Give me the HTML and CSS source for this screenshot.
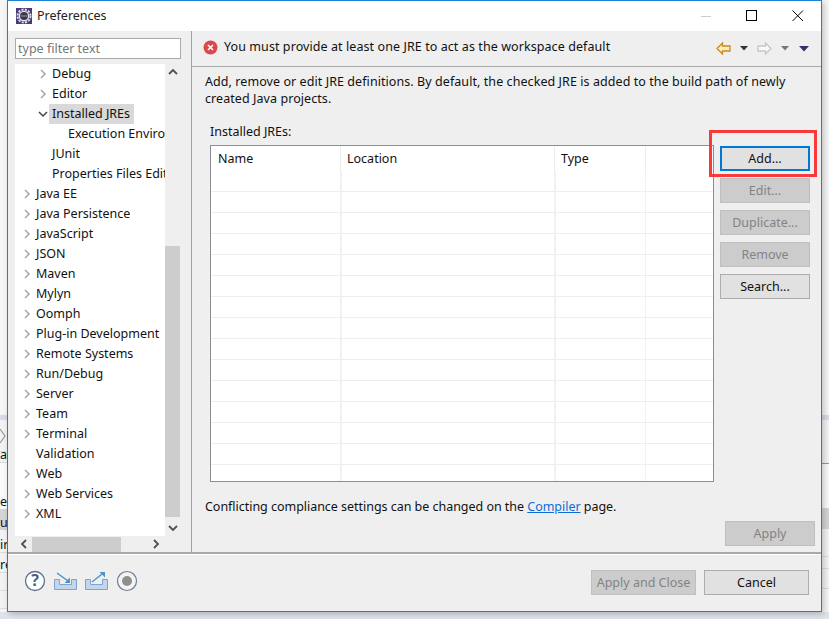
FILE: index.html
```html
<!DOCTYPE html>
<html lang="en">
<head>
<meta charset="utf-8">
<title>Preferences</title>
<link rel="stylesheet" href="styles.css">
</head>
<body>
<div class="desktop">
  <div class="strip strip-left">
    <div class="s-band"></div>
    <div class="s-row h32"><svg width="7" height="16" viewBox="0 0 7 16"><path d="M0 1l5 7-5 7" fill="none" stroke="#999" stroke-width="1.200"/></svg></div>
    <div class="s-row h10">ar</div>
    <div class="s-row h28 plain"></div>
    <div class="s-row h18 plain">ed</div>
    <div class="s-row h21 grey">ui</div>
    <div class="s-row h23">ir</div>
    <div class="s-row h20">re</div>
    <div class="s-row h18"></div>
    <div class="s-row h18"></div>
  </div>
  <div class="strip strip-right">
    <div class="s-band"></div>
    <div class="s-row h44 dark"></div>
    <div class="s-row h44 plain"></div>
    <div class="s-row h21 grey"></div>
    <div class="s-row h28"></div>
    <div class="s-row h12"></div>
    <div class="s-row h20"></div>
  </div>
  <div class="window">
    <header class="titlebar">
      <svg class="app-icon" width="16" height="16" viewBox="0 0 16 16"><rect width="16" height="16" fill="#4b3a78"/><circle cx="8" cy="8" r="6.500" fill="none" stroke="#d9d9e4" stroke-width="2" stroke-dasharray="2.200 1.200"/><circle cx="8" cy="8" r="5.300" fill="#e6e6ee"/><circle cx="8" cy="8" r="4" fill="#3a3850"/><path d="M4.500 7.400h7v1.200h-7z" fill="#8a88a0"/></svg>
      <span class="title">Preferences</span>
      <span class="win-btn"><svg width="12" height="12" viewBox="0 0 12 12"><path d="M1 6.500h10" stroke="#ccc"/></svg></span>
      <span class="win-btn"><svg width="12" height="12" viewBox="0 0 12 12"><rect x=".5" y=".5" width="10" height="10" fill="none" stroke="#000"/></svg></span>
      <span class="win-btn"><svg width="12" height="12" viewBox="0 0 12 12"><path d="M.5.5l10.500 10.500M11 .5L.5 11" stroke="#000" fill="none"/></svg></span>
    </header>
    <div class="body">
      <aside class="left">
        <input class="filter" type="text" placeholder="type filter text">
        <div class="tree-wrap">
          <div class="tree">
            <div class="node l1"><svg class="chev" viewBox="0 0 8 10"><path d="M2 1l4 4-4 4" /></svg><span>Debug</span></div>
            <div class="node l1"><svg class="chev" viewBox="0 0 8 10"><path d="M2 1l4 4-4 4" /></svg><span>Editor</span></div>
            <div class="node l1"><svg class="chev open" viewBox="0 0 10 8"><path d="M1 2l4 4 4-4" /></svg><span class="sel">Installed JREs</span></div>
            <div class="node l2"><span>Execution Enviro</span></div>
            <div class="node l1 leaf"><span>JUnit</span></div>
            <div class="node l1 leaf"><span>Properties Files Edit</span></div>
            <div class="node"><svg class="chev" viewBox="0 0 8 10"><path d="M2 1l4 4-4 4" /></svg><span>Java EE</span></div>
            <div class="node"><svg class="chev" viewBox="0 0 8 10"><path d="M2 1l4 4-4 4" /></svg><span>Java Persistence</span></div>
            <div class="node"><svg class="chev" viewBox="0 0 8 10"><path d="M2 1l4 4-4 4" /></svg><span>JavaScript</span></div>
            <div class="node"><svg class="chev" viewBox="0 0 8 10"><path d="M2 1l4 4-4 4" /></svg><span>JSON</span></div>
            <div class="node"><svg class="chev" viewBox="0 0 8 10"><path d="M2 1l4 4-4 4" /></svg><span>Maven</span></div>
            <div class="node"><svg class="chev" viewBox="0 0 8 10"><path d="M2 1l4 4-4 4" /></svg><span>Mylyn</span></div>
            <div class="node"><svg class="chev" viewBox="0 0 8 10"><path d="M2 1l4 4-4 4" /></svg><span>Oomph</span></div>
            <div class="node"><svg class="chev" viewBox="0 0 8 10"><path d="M2 1l4 4-4 4" /></svg><span>Plug-in Development</span></div>
            <div class="node"><svg class="chev" viewBox="0 0 8 10"><path d="M2 1l4 4-4 4" /></svg><span>Remote Systems</span></div>
            <div class="node"><svg class="chev" viewBox="0 0 8 10"><path d="M2 1l4 4-4 4" /></svg><span>Run/Debug</span></div>
            <div class="node"><svg class="chev" viewBox="0 0 8 10"><path d="M2 1l4 4-4 4" /></svg><span>Server</span></div>
            <div class="node"><svg class="chev" viewBox="0 0 8 10"><path d="M2 1l4 4-4 4" /></svg><span>Team</span></div>
            <div class="node"><svg class="chev" viewBox="0 0 8 10"><path d="M2 1l4 4-4 4" /></svg><span>Terminal</span></div>
            <div class="node leaf"><span>Validation</span></div>
            <div class="node"><svg class="chev" viewBox="0 0 8 10"><path d="M2 1l4 4-4 4" /></svg><span>Web</span></div>
            <div class="node"><svg class="chev" viewBox="0 0 8 10"><path d="M2 1l4 4-4 4" /></svg><span>Web Services</span></div>
            <div class="node"><svg class="chev" viewBox="0 0 8 10"><path d="M2 1l4 4-4 4" /></svg><span>XML</span></div>
          </div>
          <div class="vscroll">
            <svg class="sb-arrow" viewBox="0 0 10 8"><path d="M1 6l4-4 4 4"/></svg>
            <div class="vtrack"><div class="vthumb"></div></div>
            <svg class="sb-arrow" viewBox="0 0 10 8"><path d="M1 2l4 4 4-4"/></svg>
          </div>
          <div class="hscroll">
            <svg class="sb-arrow-h" viewBox="0 0 8 10"><path d="M6 1L2 5l4 4"/></svg>
            <div class="htrack"><div class="hthumb"></div></div>
            <svg class="sb-arrow-h" viewBox="0 0 8 10"><path d="M2 1l4 4-4 4"/></svg>
          </div>
        </div>
      </aside>
      <main class="right">
        <div class="msgbar">
          <svg width="15" height="15" viewBox="0 0 15 15"><circle cx="7.500" cy="7.500" r="7" fill="#d8484c"/><path d="M5 5l5 5M10 5l-5 5" stroke="#fff" stroke-width="1.600"/></svg>
          <span class="msg">You must provide at least one JRE to act as the workspace default</span>
          <span class="nav">
            <svg width="15" height="13" viewBox="0 0 15 13"><path d="M1 6.500L6.500 1v3H14v5H6.500v3z" fill="#fdeeb8" stroke="#c98a1e" stroke-width="1.300"/></svg>
            <svg width="8" height="5" viewBox="0 0 8 5"><path d="M0 0h8L4 4.500z" fill="#333"/></svg>
            <svg width="15" height="13" viewBox="0 0 15 13"><path d="M14 6.500L8.500 1v3H1v5h7.500v3z" fill="#f8f8f8" stroke="#c6c6c6" stroke-width="1.300"/></svg>
            <svg width="8" height="5" viewBox="0 0 8 5"><path d="M0 0h8L4 4.500z" fill="#777"/></svg>
            <svg class="last" width="10" height="6" viewBox="0 0 10 6"><path d="M0 0h10L5 5.500z" fill="#3f2a6e"/></svg>
          </span>
        </div>
        <div class="page">
          <p class="desc">Add, remove or edit JRE definitions. By default, the checked JRE is added to the build path of newly created Java projects.</p>
          <div class="label">Installed JREs:</div>
          <div class="table-row">
            <div class="table">
              <div class="thead"><span class="c1">Name</span><span class="c2">Location</span><span class="c3">Type</span><span class="c4"></span></div>
              <div class="tbody"></div>
            </div>
            <div class="btns">
              <span class="highlight"></span>
              <button class="btn focus">Add...</button>
              <button class="btn" disabled>Edit...</button>
              <button class="btn" disabled>Duplicate...</button>
              <button class="btn" disabled>Remove</button>
              <button class="btn">Search...</button>
            </div>
          </div>
          <p class="compliance">Conflicting compliance settings can be changed on the <a href="#">Compiler</a> page.</p>
          <div class="apply-row"><button class="btn apply" disabled>Apply</button></div>
        </div>
      </main>
    </div>
    <footer class="footer">
      <svg class="fi" width="22" height="22" viewBox="0 0 22 22"><circle cx="11" cy="11" r="9.500" fill="#fff" stroke="#5d6f90" stroke-width="1.300"/><text x="11" y="16" text-anchor="middle" class="q">?</text></svg>
      <svg class="fi" width="23" height="20" viewBox="0 0 23 20"><path d="M.5 8.500h5v5h12v-5h5v10H.5z" fill="#c3d6ec" stroke="#7ea3cc"/><path d="M3 2l11 8" stroke="#4d94c4" stroke-width="1.500"/><path d="M16 12V6.500l-5.500 5.500z" fill="#4d94c4"/></svg>
      <svg class="fi" width="23" height="20" viewBox="0 0 23 20"><path d="M.5 8.500h5v5h12v-5h5v10H.5z" fill="#c3d6ec" stroke="#7ea3cc"/><path d="M7 11L17 3" stroke="#4d94c4" stroke-width="1.500"/><path d="M20 1v5.500L14.500 1z" fill="#4d94c4"/></svg>
      <svg class="fi" width="22" height="22" viewBox="0 0 22 22"><circle cx="11" cy="11" r="9.500" fill="#f4f4f4" stroke="#6d7c96" stroke-width="1.200"/><circle cx="11" cy="11" r="5" fill="#8f8f8f"/></svg>
      <div class="spacer"></div>
      <button class="btn wide" disabled>Apply and Close</button>
      <button class="btn wide">Cancel</button>
    </footer>
  </div>
</div>
</body>
</html>
```

FILE: styles.css
```css
* { box-sizing: border-box; }
html, body { margin: 0; padding: 0; }
body { width: 829px; height: 619px; overflow: hidden; background: #dfe5ee; font-family: "Noto Sans", "Open Sans", sans-serif; font-size: 12.500px; color: #111; }
.desktop { position: relative; width: 829px; height: 619px; background: linear-gradient(to bottom, #f6f6f6 0, #f6f6f6 612px, #dfe3ea 612px); }

.strip { position: absolute; top: 415px; height: 197px; overflow: hidden; display: flex; flex-direction: column; font-size: 12.500px; }
.strip-left { left: 0; width: 7px; }
.strip-right { left: 822px; width: 7px; }
.s-band { flex: none; height: 5px; background: #d6dbe6; }
.s-row { flex: none; background: #f3f3f3; border-bottom: 1px solid #dcdcdc; white-space: nowrap; display: flex; align-items: flex-end; line-height: 14px; }
.s-row.plain { background: #fafafa; border-bottom: 0; }
.s-row.grey { background: #d4d4d4; border-bottom: 0; }
.s-row.dark { border-bottom-color: #999; }
.h10 { height: 11px; }
.h12 { height: 12px; }
.h18 { height: 18px; }
.h20 { height: 20px; }
.h21 { height: 21px; }
.h23 { height: 23px; }
.h28 { height: 28px; }
.h32 { height: 32px; align-items: center; }
.h44 { height: 44px; }

.window { position: absolute; left: 7px; top: 0; width: 815px; height: 612px; display: flex; flex-direction: column; background: #efefef; border: 1px solid #2b7cc4; border-top-color: #1a82d8; box-shadow: 2px 2px 6px rgba(0,0,0,.22); }
.titlebar { flex: none; height: 30px; background: #fff; display: flex; align-items: center; padding-left: 8px; padding-bottom: 1px; }
.app-icon { flex: none; }
.title { margin-left: 5px; flex: 1; font-size: 12.500px; color: #222; }
.win-btn { width: 46px; display: flex; align-items: center; justify-content: center; }

.body { flex: 1; display: flex; min-height: 0; }
.left { flex: none; width: 184px; padding: 7px 0 0 7px; border-right: 1px solid #a0a0a0; }
.filter { display: block; width: 166px; height: 21px; border: 1px solid #a9a9a9; background: #fff; font: 12.500px "Noto Sans", sans-serif; padding: 0 2px; outline: none; }
.filter::placeholder { color: #777; }
.tree-wrap { margin-top: 5px; width: 166px; display: grid; grid-template-columns: 150px 16px; grid-template-rows: 472px 16px; }
.tree { background: #fff; overflow: hidden; }
.node { height: 20px; display: flex; align-items: center; padding-left: 8px; white-space: nowrap; overflow: hidden; line-height: 20px; }
.node.l1 { padding-left: 24px; }
.node.l2 { padding-left: 53px; }
.node.leaf { padding-left: 21px; }
.node.l1.leaf { padding-left: 37px; }
.chev { flex: none; width: 8px; height: 10px; margin-right: 5px; fill: none; stroke: #a6a6a6; stroke-width: 1.500; }
.chev.open { width: 10px; height: 8px; stroke: #444; margin-left: -1px; margin-right: 1px; }
.sel { background: #d9d9d9; padding: 0 4px 0 3px; display: block; height: 20px; }
.vscroll { background: #efefef; display: flex; flex-direction: column; align-items: center; }
.vtrack { flex: 1; width: 100%; }
.vthumb { width: 15px; height: 271px; margin-top: 166px; background: #cdcdcd; }
.sb-arrow { flex: none; width: 10px; height: 8px; margin: 4px 0; fill: none; stroke: #505050; stroke-width: 1.800; }
.hscroll { grid-column: 1 / 3; background: #efefef; display: flex; align-items: center; width: 150px; }
.sb-arrow-h { flex: none; width: 8px; height: 10px; margin: 0 5px; fill: none; stroke: #505050; stroke-width: 1.800; }
.htrack { flex: 1; height: 15px; }
.hthumb { width: 89px; height: 15px; background: #cdcdcd; margin-left: -1px; }

.right { flex: 1; display: flex; flex-direction: column; min-width: 0; }
.msgbar { flex: none; height: 36px; border-bottom: 1px solid #a9a9a9; display: flex; align-items: center; padding: 0 0 3px 11px; }
.msg { margin-left: 6px; flex: 1; letter-spacing: .08px; padding-bottom: 1px; }
.nav { display: flex; align-items: center; gap: 9px; padding: 3px 12px 0 0; }
.nav .last { margin-left: 1px; }
.page { flex: 1; padding: 6px 6px 0 13px; display: flex; flex-direction: column; }
.desc { margin: 0; line-height: 17px; letter-spacing: .07px; padding-right: 1px; }
.label { margin: 16px 0 0 5px; line-height: 17px; }
.table-row { display: flex; margin: 5px 0 0 5px; }
.table { flex: none; width: 504px; height: 337px; border: 1px solid #8d8d95; background: #fff; display: flex; flex-direction: column; }
.thead { flex: none; height: 25px; display: grid; grid-template-columns: 130px 214px 91px 1fr; }
.thead span { padding-left: 6px; line-height: 26px; border-right: 1px solid #ececec; }
.thead .c1 { padding-left: 7px; }
.thead .c4 { border-right: 0; }
.tbody { flex: 1; background-image:
  linear-gradient(to right, transparent 129px, #eef2f8 129px, #eef2f8 131px, transparent 131px, transparent 343px, #eef2f8 343px, #eef2f8 345px, transparent 345px, transparent 434px, #eef2f8 434px, #eef2f8 435px, transparent 435px),
  repeating-linear-gradient(to bottom, transparent 0, transparent 20px, #eeeeee 20px, #eeeeee 21px); }
.btns { display: flex; flex-direction: column; margin-left: 5px; gap: 7px; position: relative; padding-top: 1px; }
.btn { display: block; font: 12.500px "Noto Sans", sans-serif; color: #111; background: #e1e1e1; border: 1px solid #adadad; height: 25px; padding: 0; }
.btns .btn { width: 90px; margin-left: 1px; }
.btn:disabled { background: #cccccc; color: #838383; border-color: #bfbfbf; }
.btn.focus { border: 2px solid #0078d7; }
.highlight { position: absolute; left: -10px; top: -15px; width: 108px; height: 47px; border: 3px solid #f83a3a; pointer-events: none; }
.compliance { margin: 16px 0 0; line-height: 17px; letter-spacing: -.03px; }
.compliance a { color: #0f6cd6; }
.apply-row { margin-top: 6px; display: flex; justify-content: flex-end; }
.btn.apply { width: 90px; }
.footer { flex: none; height: 59px; border-top: 2px solid #a9a9a9; box-shadow: inset 0 1px 0 #fff; display: flex; align-items: center; padding: 0 12px 1px 16px; gap: 8px; }
.fi { margin-top: -3px; flex: none; }
.q { font: bold 16px "Noto Sans", sans-serif; fill: #4a5f85; }
.spacer { flex: 1; }
.btn.wide { width: 105px; height: 25px; }
```
